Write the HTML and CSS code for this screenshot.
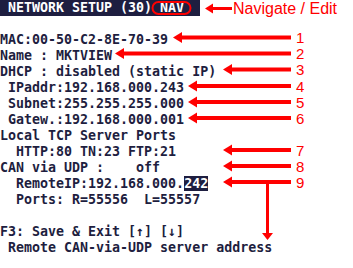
FILE: index.html
```html
<!DOCTYPE html>
<html>
<head>
<meta charset="utf-8">
<link rel="stylesheet" href="styles.css">
</head>
<body>
<div class="screen">
  <div class="line title"> NETWORK SETUP (30) <span class="nav">NAV</span> </div>
  <div class="line"> </div>
  <div class="line">MAC:00-50-C2-8E-70-39</div>
  <div class="line">Name : MKTVIEW</div>
  <div class="line">DHCP : disabled (static IP)</div>
  <div class="line"> IPaddr:192.168.000.243</div>
  <div class="line"> Subnet:255.255.255.000</div>
  <div class="line"> Gatew.:192.168.000.001</div>
  <div class="line">Local TCP Server Ports</div>
  <div class="line">  HTTP:80 TN:23 FTP:21</div>
  <div class="line">CAN via UDP :    off</div>
  <div class="line">  RemoteIP:192.168.000.<span class="sel">242</span></div>
  <div class="line">  Ports: R=55556  L=55557</div>
  <div class="line"> </div>
  <div class="line">F3: Save &amp; Exit [↑] [↓]</div>
  <div class="line"> Remote CAN-via-UDP server address</div>
</div>
<svg class="notes" width="353" height="268" viewBox="0 0 353 268">
  <g fill="#ff0000">
    <rect x="152.5" y="2" width="38" height="12" rx="6" ry="6" fill="none" stroke="#ff0000" stroke-width="2"/>
    <polygon points="205,8.5 213,3.5 213,13.5"/><rect x="211" y="7" width="21" height="3"/>
    <text class="lbl" x="233" y="14">Navigate / Edit</text>

    <polygon points="173,37.5 182,32 182,43"/><rect x="180" y="35.5" width="111" height="4"/>
    <text class="num" x="296" y="43">1</text>
    <polygon points="115,53.5 124,48 124,59"/><rect x="122" y="51.5" width="169" height="4"/>
    <text class="num" x="296" y="59">2</text>
    <polygon points="223,69.5 232,64 232,75"/><rect x="230" y="67.5" width="61" height="4"/>
    <text class="num" x="296" y="75">3</text>
    <polygon points="188,86 197,80.5 197,91.5"/><rect x="195" y="84" width="96" height="4"/>
    <text class="num" x="296" y="91.5">4</text>
    <polygon points="188,102 197,96.5 197,107.5"/><rect x="195" y="100" width="96" height="4"/>
    <text class="num" x="296" y="107.5">5</text>
    <polygon points="188,118 197,112.5 197,123.5"/><rect x="195" y="116" width="96" height="4"/>
    <text class="num" x="296" y="123.5">6</text>
    <polygon points="223,150 232,144.5 232,155.5"/><rect x="230" y="148" width="61" height="4"/>
    <text class="num" x="296" y="155.5">7</text>
    <polygon points="223,166 232,160.5 232,171.5"/><rect x="230" y="164" width="61" height="4"/>
    <text class="num" x="296" y="171.5">8</text>
    <polygon points="223,182 232,176.5 232,187.5"/><rect x="230" y="180" width="61" height="4"/>
    <text class="num" x="296" y="187.5">9</text>
    <rect x="266" y="182" width="3" height="53"/>
    <polygon points="267.5,240 262,233 273,233"/>
  </g>
</svg>
</body>
</html>
```

FILE: styles.css
```css
html, body {
  margin: 0;
  padding: 0;
  background: #ffffff;
}
body {
  position: relative;
  width: 353px;
  height: 268px;
  overflow: hidden;
}
.screen {
  font-family: "DejaVu Sans Mono", "Liberation Mono", monospace;
  font-weight: bold;
  font-size: 13.3px;
  color: #1e1e40;
}
.line {
  height: 16px;
  line-height: 16px;
  white-space: pre;
}
.title {
  background: #1e1e40;
  color: #ffffff;
  width: 200px;
}
.sel {
  background: #1e1e40;
  color: #ffffff;
}
.notes {
  position: absolute;
  left: 0;
  top: 0;
}
.lbl {
  font-family: "Liberation Sans", Arial, sans-serif;
  font-size: 16px;
}
.num {
  font-family: "Liberation Sans", Arial, sans-serif;
  font-size: 15px;
}
```
